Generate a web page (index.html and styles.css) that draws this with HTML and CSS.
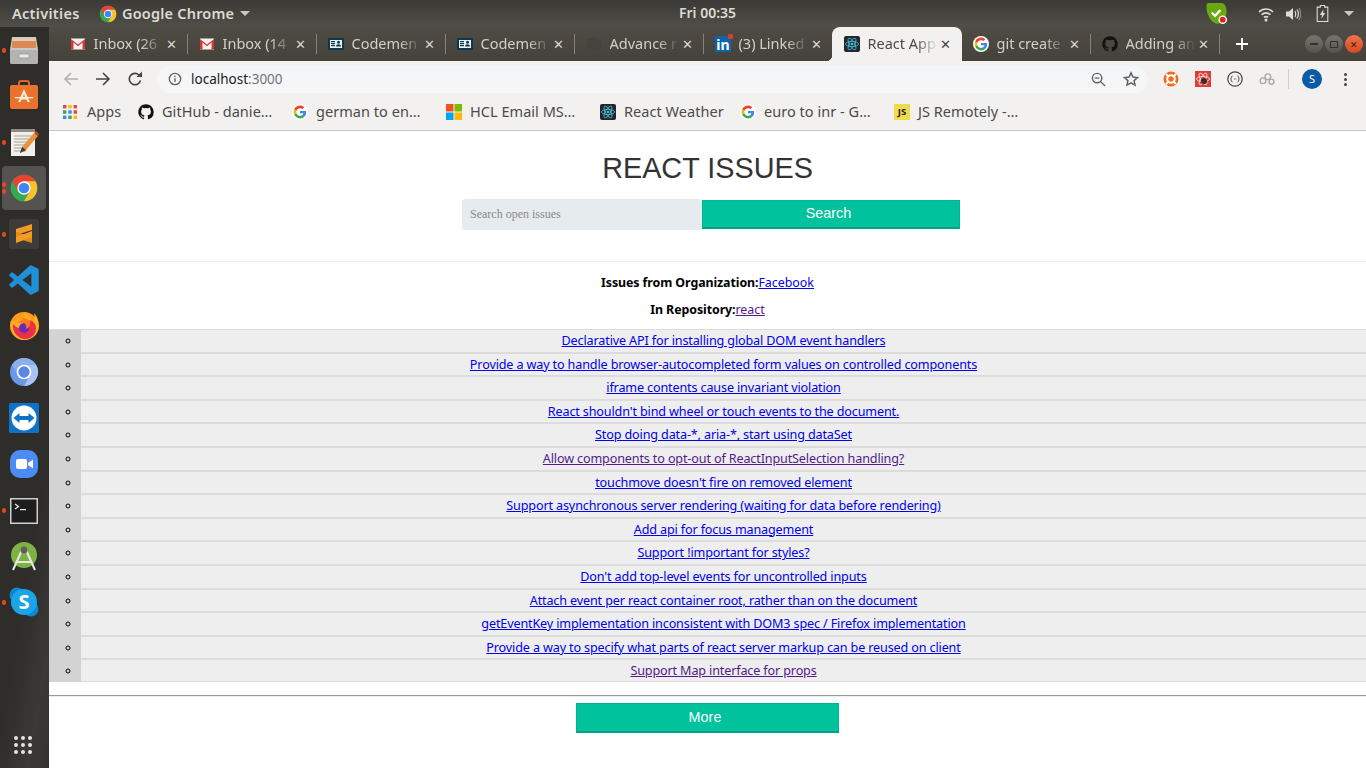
FILE: index.html
```html
<!DOCTYPE html>
<html lang="en">

<head>
  <meta charset="UTF-8" />
  <title>React App</title>
  <link rel="stylesheet" href="styles.css">
</head>

<body>
  <svg class="sprite" xmlns="http://www.w3.org/2000/svg">
    <symbol id="i-gmail" viewBox="0 0 16 16">
      <rect x="1" y="2.5" width="14" height="11" fill="#f4f4f4" />
      <path d="M1 13.5V3l7 5.5L15 3v10.500h-2.500V6.600L8 10.200 3.500 6.600v6.900z" fill="#d93a30" />
    </symbol>
    <symbol id="i-code" viewBox="0 0 16 16">
      <rect x="0" y="2" width="16" height="12" rx="1" fill="#10384a" />
      <rect x="2" y="4" width="12" height="8" fill="#e8f0f2" />
      <rect x="3" y="5" width="4" height="1.200" fill="#10384a" />
      <rect x="3" y="7" width="4" height="1.200" fill="#10384a" />
      <rect x="3" y="9" width="4" height="1.200" fill="#10384a" />
      <circle cx="10.500" cy="6.200" r="1.500" fill="#10384a" />
      <path d="M8 10.500c0-3 5-3 5 0z" fill="#10384a" />
    </symbol>
    <symbol id="i-google" viewBox="-3 -3 30 30">
      <circle cx="12" cy="12" r="15" fill="#fff" />
      <path fill="#4285F4" d="M23.490 12.270c0-.790-.070-1.540-.190-2.270H12v4.510h6.470c-.290 1.480-1.140 2.730-2.400 3.580v3h3.860c2.260-2.090 3.560-5.170 3.560-8.820z" />
      <path fill="#34A853" d="M12 24c3.240 0 5.950-1.080 7.930-2.910l-3.860-3c-1.080.720-2.450 1.160-4.070 1.160-3.130 0-5.780-2.110-6.730-4.960H1.290v3.090C3.260 21.300 7.310 24 12 24z" />
      <path fill="#FBBC05" d="M5.270 14.290c-.250-.720-.380-1.490-.380-2.290s.140-1.570.380-2.290V6.620H1.290C.470 8.240 0 10.060 0 12s.470 3.760 1.290 5.380l3.980-3.090z" />
      <path fill="#EA4335" d="M12 4.750c1.770 0 3.350.610 4.600 1.800l3.420-3.420C17.950 1.190 15.240 0 12 0 7.310 0 3.260 2.700 1.290 6.620l3.980 3.090C6.220 6.860 8.870 4.750 12 4.750z" />
    </symbol>
    <symbol id="i-github" viewBox="0 0 24 25">
      <path fill="#111" d="M12 .5C5.370.5 0 5.870 0 12.500c0 5.300 3.440 9.800 8.200 11.390.6.110.82-.260.82-.580v-2.030c-3.340.730-4.040-1.610-4.040-1.610-.550-1.390-1.330-1.760-1.330-1.760-1.090-.740.080-.730.080-.730 1.200.090 1.840 1.240 1.840 1.240 1.070 1.830 2.810 1.300 3.490 1 .110-.780.420-1.300.760-1.600-2.670-.3-5.470-1.330-5.470-5.930 0-1.310.470-2.380 1.240-3.220-.120-.3-.540-1.520.120-3.180 0 0 1.010-.320 3.300 1.230a11.500 11.500 0 0 1 6 0c2.290-1.550 3.300-1.230 3.300-1.230.660 1.660.240 2.880.120 3.180.770.840 1.240 1.910 1.240 3.220 0 4.610-2.810 5.620-5.480 5.920.430.370.810 1.100.810 2.220v3.290c0 .320.220.690.830.580A12 12 0 0 0 24 12.500C24 5.870 18.630.5 12 .5z" />
    </symbol>
    <symbol id="i-react" viewBox="0 0 16 16">
      <rect width="16" height="16" rx="2" fill="#20262b" />
      <g fill="none" stroke="#4fc3dc" stroke-width=".8">
        <ellipse cx="8" cy="8" rx="6.500" ry="2.600" />
        <ellipse cx="8" cy="8" rx="6.500" ry="2.600" transform="rotate(60 8 8)" />
        <ellipse cx="8" cy="8" rx="6.500" ry="2.600" transform="rotate(120 8 8)" />
      </g>
      <circle cx="8" cy="8" r="1.300" fill="#4fc3dc" />
    </symbol>
    <symbol id="i-chrome" viewBox="0 0 48 48">
      <circle cx="24" cy="24" r="20" fill="#34a853" />
      <path d="M6.700 14A20 20 0 0 1 41.320 14H24L15.340 29z" fill="#ea4335" />
      <path d="M41.320 14A20 20 0 0 1 24 44L32.660 29 24 14z" fill="#fbc02d" />
      <circle cx="24" cy="24" r="10" fill="#fff" />
      <circle cx="24" cy="24" r="8" fill="#4285f4" />
    </symbol>
  </svg>

  <header class="topbar">
    <span class="activities">Activities</span>
    <div class="app-menu">
      <svg class="app-icon"><use href="#i-chrome" /></svg>
      <span>Google Chrome</span>
      <i class="caret"></i>
    </div>
    <span class="clock">Fri 00:35</span>
    <div class="tray">
      <svg class="tray-shield" viewBox="0 0 24 24">
        <path d="M4 1h13c3 0 5 3 5.500 8 .4 6-3 12-10 14C6 21 1.500 14 1.500 4c0-2 1-3 2.500-3z" fill="#6aa80f" />
        <path d="M7 11l3.500 3.500L16 8.500" fill="none" stroke="#fff" stroke-width="2.400" />
        <circle cx="18.500" cy="18.500" r="4.500" fill="#fff" />
        <circle cx="18.500" cy="18.500" r="3" fill="#e3201b" />
      </svg>
      <svg class="tray-wifi" viewBox="0 0 16 16">
        <g fill="none" stroke="#dedcd6" stroke-width="1.700">
          <path d="M1 6c4-4 10-4 14 0" />
          <path d="M3.500 8.700c3-2.500 6-2.500 9 0" />
          <path d="M6 11.300c1.500-1 2.500-1 4 0" />
        </g>
        <circle cx="8" cy="14" r="1.500" fill="#dedcd6" />
      </svg>
      <svg class="tray-sound" viewBox="0 0 16 16">
        <path d="M1 5.500h3L8 2v12l-4-3.500H1z" fill="#dedcd6" />
        <g fill="none" stroke="#dedcd6" stroke-width="1.200">
          <path d="M10 5c1 1.800 1 4.200 0 6" />
          <path d="M12 3.500c1.800 2.800 1.800 6.200 0 9" />
          <path d="M14 2c2.300 3.800 2.300 8.200 0 12" stroke="#8f8d87" />
        </g>
      </svg>
      <svg class="tray-battery" viewBox="0 0 12 16">
        <path d="M4 .5h4v1.500h3v13.500H1V2h3z" fill="none" stroke="#dedcd6" />
        <path d="M7 4L3.500 9.500h2L5 13l3.500-5.500h-2z" fill="#dedcd6" />
      </svg>
      <i class="caret"></i>
    </div>
  </header>

  <div class="desktop">
    <aside class="dock">
      <div class="dock-item">
        <i class="dot"></i>
        <svg viewBox="0 0 32 32">
          <path d="M4 3h24l2 13v12a2 2 0 0 1-2 2H4a2 2 0 0 1-2-2V16z" fill="#c9c9c5" />
          <rect x="4" y="5" width="24" height="9" fill="#d98a55" />
          <rect x="4" y="5" width="24" height="2" fill="#f0c9a0" />
          <rect x="2" y="16" width="28" height="14" rx="2" fill="#b3b3af" />
          <rect x="11" y="20" width="10" height="4" rx="1" fill="#e9e9e6" stroke="#85857f" stroke-width=".6" />
        </svg>
      </div>
      <div class="dock-item">
        <svg viewBox="0 2 32 32">
          <path d="M11 8V5a2 2 0 0 1 2-2h6a2 2 0 0 1 2 2v3" fill="none" stroke="#d9622b" stroke-width="2" />
          <rect x="2" y="7" width="28" height="24" rx="2" fill="#e9722f" />
          <path d="M16 11l-6 13h2.500l1-2.500h5l1 2.500H22zM15 19l1-3 1 3z" fill="#fbe9dc" />
          <rect x="7" y="19" width="18" height="1.300" fill="#fbe9dc" />
        </svg>
      </div>
      <div class="dock-item">
        <i class="dot"></i>
        <svg viewBox="0 0 32 32">
          <rect x="3" y="3" width="24" height="27" fill="#f1efe7" />
          <rect x="3" y="3" width="24" height="3" fill="#8d8b85" />
          <g stroke="#a5a39c" stroke-width="1">
            <path d="M6 10h18M6 13h18M6 16h14M6 19h10M6 22h8M6 25h12" />
          </g>
          <path d="M12 27l2-6L26 7l4 3-12 14z" fill="#e8923a" />
          <path d="M26 7l2-2 3 3-1 2z" fill="#d33a3a" />
          <path d="M12 27l2-6 4 3z" fill="#3a3a3a" />
        </svg>
      </div>
      <div class="dock-item is-active">
        <i class="dot"></i>
        <i class="dot dot-two"></i>
        <svg><use href="#i-chrome" /></svg>
      </div>
      <div class="dock-item">
        <i class="dot"></i>
        <svg viewBox="0 0 32 32">
          <rect x="1" y="1" width="30" height="30" rx="2" fill="#3d3c3a" />
          <path d="M24 6v6L8 17v-6z" fill="#f59a23" />
          <path d="M8 14l16 5v6L8 20z" fill="#e8881a" />
          <path d="M24 13v6L8 25v-6z" fill="#f59a23" />
        </svg>
      </div>
      <div class="dock-item">
        <svg viewBox="-1 -1 26 26">
          <path fill="#1f8fd6" d="M23.150 2.587L18.210.21a1.494 1.494 0 0 0-1.705.29l-9.460 8.630-4.120-3.128a.999.999 0 0 0-1.276.057L.327 7.261A1 1 0 0 0 .326 8.740L3.899 12 .326 15.260a1 1 0 0 0 .001 1.479L1.650 17.940a.999.999 0 0 0 1.276.057l4.120-3.128 9.460 8.630a1.492 1.492 0 0 0 1.704.29l4.942-2.377A1.500 1.500 0 0 0 24 20.060V3.939a1.500 1.500 0 0 0-.85-1.352zm-5.146 14.861L10.826 12l7.178-5.448v10.896z" />
        </svg>
      </div>
      <div class="dock-item">
        <svg viewBox="0 1 32 32">
          <circle cx="16" cy="17" r="14" fill="#ff9a1e" />
          <path d="M3 12c-2 9 4 19 13 19 8 0 15-6 15-14 0-5-2-10-5-13 1 4 0 7-2 8-1-4-4-6-8-9 1 4-1 6-4 8-1-1-2-1-3-1 0 1-1 2-1 3-2-1-4-1-5-1z" fill="#fbb01d" />
          <path d="M5 15c-1 8 5 15 12 15s11-5 11-11c0-4-3-7-6-8 1 3-1 4-3 5l-4-1c-2 1-1 3 1 4-2 1-7 1-11-4z" fill="#ea2f4a" />
          <circle cx="16" cy="19" r="5" fill="#6b2bb5" />
          <path d="M9 13c3 1 5 2 7 1 2 1 3 3 2 6 3-1 5-4 4-8-2-2-5-3-8-3 1 2 0 3-2 3z" fill="#ff7a1e" />
        </svg>
      </div>
      <div class="dock-item">
        <svg viewBox="0 0 48 48">
          <circle cx="24" cy="24" r="21" fill="#6a97e8" />
          <path d="M6 13A21 21 0 0 1 42 13H24L15 29z" fill="#8aaff0" />
          <path d="M42 13A21 21 0 0 1 24 45l9-16-9-16z" fill="#a8c3f3" />
          <circle cx="24" cy="24" r="11" fill="#fff" />
          <circle cx="24" cy="24" r="8.500" fill="#5a88e0" />
        </svg>
      </div>
      <div class="dock-item">
        <svg viewBox="0 0 32 32">
          <rect x="1" y="1" width="30" height="30" rx="1.500" fill="#0e72c8" />
          <circle cx="16" cy="16" r="12.500" fill="#fff" />
          <path d="M5.500 16l6-5v3h9v-3l6 5-6 5v-3h-9v3z" fill="#0e72c8" />
        </svg>
      </div>
      <div class="dock-item">
        <svg viewBox="0 0 32 32">
          <rect x="2" y="2" width="28" height="28" rx="10" fill="#4b8cf5" />
          <rect x="8" y="11" width="11" height="10" rx="2" fill="#fff" />
          <path d="M20 15l5-3.500v9L20 17z" fill="#fff" />
        </svg>
      </div>
      <div class="dock-item">
        <i class="dot"></i>
        <svg viewBox="0 -1 32 32">
          <rect x="2" y="3" width="28" height="26" fill="#d0d0cc" />
          <rect x="3.500" y="4.500" width="25" height="23" fill="#1d1d1d" />
          <path d="M7 9l3.500 2.500L7 14" fill="none" stroke="#eee" stroke-width="1.200" />
          <rect x="12" y="14" width="6" height="1.200" fill="#eee" />
        </svg>
      </div>
      <div class="dock-item">
        <svg viewBox="0 0 32 32">
          <circle cx="16" cy="15" r="13" fill="#7cb342" />
          <path d="M5 30l9-20M27 30l-9-20M9 22h14" stroke="#e8e8e4" stroke-width="2" fill="none" />
          <circle cx="16" cy="10" r="3.500" fill="#5f5f5f" />
        </svg>
      </div>
      <div class="dock-item">
        <i class="dot"></i>
        <svg viewBox="0 0 32 32">
          <circle cx="9" cy="9" r="7.500" fill="#0a87d6" />
          <circle cx="23" cy="23" r="7.500" fill="#0a87d6" />
          <circle cx="16" cy="16" r="13" fill="#1aa5e8" />
          <text x="16" y="23" class="skype-s">S</text>
        </svg>
      </div>
      <div class="dock-grid">
        <i></i><i></i><i></i><i></i><i></i><i></i><i></i><i></i><i></i>
      </div>
    </aside>

    <div class="browser">
      <div class="tabstrip">
        <div class="tab">
          <svg class="tab-icon"><use href="#i-gmail" /></svg>
          <span class="tab-title">Inbox (26</span>
          <span class="tab-close">✕</span>
        </div>
        <div class="tab">
          <svg class="tab-icon"><use href="#i-gmail" /></svg>
          <span class="tab-title">Inbox (14</span>
          <span class="tab-close">✕</span>
        </div>
        <div class="tab">
          <svg class="tab-icon"><use href="#i-code" /></svg>
          <span class="tab-title">Codemen</span>
          <span class="tab-close">✕</span>
        </div>
        <div class="tab">
          <svg class="tab-icon"><use href="#i-code" /></svg>
          <span class="tab-title">Codemen</span>
          <span class="tab-close">✕</span>
        </div>
        <div class="tab">
          <svg class="tab-icon" viewBox="0 0 16 16"><circle cx="8" cy="8" r="7" fill="#45433e" /></svg>
          <span class="tab-title">Advance r</span>
          <span class="tab-close">✕</span>
        </div>
        <div class="tab no-sep">
          <span class="tab-icon linkedin">in<i></i></span>
          <span class="tab-title">(3) Linked</span>
          <span class="tab-close">✕</span>
        </div>
        <div class="tab is-active">
          <svg class="tab-icon"><use href="#i-react" /></svg>
          <span class="tab-title">React App</span>
          <span class="tab-close">✕</span>
        </div>
        <div class="tab">
          <svg class="tab-icon"><use href="#i-google" /></svg>
          <span class="tab-title">git create</span>
          <span class="tab-close">✕</span>
        </div>
        <div class="tab">
          <svg class="tab-icon"><use href="#i-github" /></svg>
          <span class="tab-title">Adding an</span>
          <span class="tab-close">✕</span>
        </div>
        <svg class="new-tab" viewBox="0 0 14 14">
          <path d="M7 1v12M1 7h12" stroke="#fff" stroke-width="1.800" />
        </svg>
        <div class="win-buttons">
          <span class="win-btn"><i class="win-min"></i></span>
          <span class="win-btn"><i class="win-max"></i></span>
          <span class="win-btn win-close">✕</span>
        </div>
      </div>

      <div class="toolbar">
        <svg class="tool tool-off" viewBox="0 0 16 16"><path d="M15 8H2M8 2L2 8l6 6" fill="none" stroke="currentColor" stroke-width="1.600" /></svg>
        <svg class="tool" viewBox="0 0 16 16"><path d="M1 8h13M8 2l6 6-6 6" fill="none" stroke="currentColor" stroke-width="1.600" /></svg>
        <svg class="tool" viewBox="0 0 16 16"><path d="M13.500 9.500A5.700 5.700 0 1 1 12 4" fill="none" stroke="currentColor" stroke-width="1.600" /><path d="M9.500 6H15V.5z" fill="currentColor" /></svg>
        <div class="omnibox">
          <svg class="info" viewBox="0 0 16 16">
            <circle cx="8" cy="8" r="6.500" fill="none" stroke="#5f6368" stroke-width="1.500" />
            <path d="M7.200 7h1.600v4.500H7.200zM7.200 4.200h1.600v1.600H7.200z" fill="#5f6368" />
          </svg>
          <span class="url">localhost<span class="url-port">:3000</span></span>
          <svg class="omni-zoom" viewBox="0 0 16 16">
            <circle cx="6.500" cy="6.500" r="5" fill="none" stroke="#5f6368" stroke-width="1.500" />
            <path d="M10 10l5 5M4 6.500h5" stroke="#5f6368" stroke-width="1.500" />
          </svg>
          <svg class="omni-star" viewBox="0 0 16 16">
            <path d="M8 1.800l1.900 4.200 4.600.5-3.400 3.100.9 4.500-4-2.300-4 2.300.9-4.500L1.500 6.500l4.600-.5z" fill="none" stroke="#5f6368" stroke-width="1.500" />
          </svg>
        </div>
        <div class="extensions">
          <svg viewBox="0 0 16 16">
            <circle cx="8" cy="8" r="7.500" fill="#f26b21" />
            <circle cx="8" cy="8" r="3.800" fill="none" stroke="#fff" stroke-width="2" />
            <path d="M3 3l3 3M13 3l-3 3M3 13l3-3M13 13l-3-3" stroke="#fff" stroke-width="2" />
          </svg>
          <svg viewBox="0 0 16 16">
            <rect width="16" height="16" fill="#d9403a" />
            <g fill="none" stroke="#fbe3e1" stroke-width=".8">
              <ellipse cx="8" cy="8" rx="6.500" ry="2.500" />
              <ellipse cx="8" cy="8" rx="6.500" ry="2.500" transform="rotate(60 8 8)" />
              <ellipse cx="8" cy="8" rx="6.500" ry="2.500" transform="rotate(120 8 8)" />
            </g>
            <circle cx="9" cy="10" r="3" fill="#3a2a2a" />
          </svg>
          <svg viewBox="0 0 16 16">
            <circle cx="8" cy="8" r="7.200" fill="none" stroke="#444" stroke-width="1.200" />
            <path d="M5.500 5C4 5 4.500 7.500 3.800 8c.7.500.2 3 1.700 3M10.500 5c1.500 0 1 2.500 1.700 3-.7.500-.2 3-1.700 3" fill="none" stroke="#444" />
            <path d="M7 8h.8M8.500 8h.8" stroke="#444" />
          </svg>
          <svg viewBox="0 0 18 16">
            <g fill="none" stroke="#a8a8a8" stroke-width="1.500">
              <circle cx="4.500" cy="10" r="3.200" />
              <circle cx="10" cy="5.500" r="3.200" />
              <circle cx="14" cy="11" r="2.800" />
            </g>
          </svg>
        </div>
        <i class="tool-divider"></i>
        <span class="avatar">S</span>
        <div class="kebab"><i></i><i></i><i></i></div>
      </div>

      <div class="bookmarks">
        <div class="bookmark bm-apps">
          <svg viewBox="0 0 14 14">
            <rect x="0" y="0" width="3.400" height="3.400" fill="#ea4335" /><rect x="5.300" y="0" width="3.400" height="3.400" fill="#fbbc05" /><rect x="10.600" y="0" width="3.400" height="3.400" fill="#ea4335" />
            <rect x="0" y="5.300" width="3.400" height="3.400" fill="#34a853" /><rect x="5.300" y="5.300" width="3.400" height="3.400" fill="#4285f4" /><rect x="10.600" y="5.300" width="3.400" height="3.400" fill="#ea4335" />
            <rect x="0" y="10.600" width="3.400" height="3.400" fill="#4285f4" /><rect x="5.300" y="10.600" width="3.400" height="3.400" fill="#34a853" /><rect x="10.600" y="10.600" width="3.400" height="3.400" fill="#fbbc05" />
          </svg>
          <span>Apps</span>
        </div>
        <div class="bookmark bm-github"><svg><use href="#i-github" /></svg><span>GitHub - danie…</span></div>
        <div class="bookmark bm-german"><svg><use href="#i-google" /></svg><span>german to en…</span></div>
        <div class="bookmark bm-hcl">
          <svg viewBox="0 0 16 16">
            <rect width="7.500" height="7.500" fill="#f25022" /><rect x="8.500" width="7.500" height="7.500" fill="#7fba00" />
            <rect y="8.500" width="7.500" height="7.500" fill="#00a4ef" /><rect x="8.500" y="8.500" width="7.500" height="7.500" fill="#ffb900" />
          </svg>
          <span>HCL Email MS…</span>
        </div>
        <div class="bookmark bm-weather"><svg><use href="#i-react" /></svg><span>React Weather</span></div>
        <div class="bookmark bm-euro"><svg><use href="#i-google" /></svg><span>euro to inr - G…</span></div>
        <div class="bookmark bm-js"><b class="js-icon">JS</b><span>JS Remotely -…</span></div>
      </div>

      <main class="page">
        <h1>REACT ISSUES</h1>
        <form class="search-form">
          <input type="text" class="search-input" placeholder="Search open issues" />
          <button type="button" class="green-btn search-btn">Search</button>
        </form>
        <hr class="light-rule" />
        <p class="meta"><b>Issues from Organization:</b><a href="#">Facebook</a></p>
        <p class="meta"><b>In Repository:</b><a href="#" class="seen">react</a></p>
        <ul class="issues">
          <li><a href="#">Declarative API for installing global DOM event handlers</a></li>
          <li><a href="#">Provide a way to handle browser-autocompleted form values on controlled components</a></li>
          <li><a href="#">iframe contents cause invariant violation</a></li>
          <li><a href="#">React shouldn't bind wheel or touch events to the document.</a></li>
          <li><a href="#">Stop doing data-*, aria-*, start using dataSet</a></li>
          <li><a href="#" class="seen">Allow components to opt-out of ReactInputSelection handling?</a></li>
          <li><a href="#">touchmove doesn't fire on removed element</a></li>
          <li><a href="#">Support asynchronous server rendering (waiting for data before rendering)</a></li>
          <li><a href="#">Add api for focus management</a></li>
          <li><a href="#">Support !important for styles?</a></li>
          <li><a href="#">Don't add top-level events for uncontrolled inputs</a></li>
          <li><a href="#">Attach event per react container root, rather than on the document</a></li>
          <li><a href="#">getEventKey implementation inconsistent with DOM3 spec / Firefox implementation</a></li>
          <li><a href="#">Provide a way to specify what parts of react server markup can be reused on client</a></li>
          <li><a href="#" class="seen">Support Map interface for props</a></li>
        </ul>
        <hr class="dark-rule" />
        <button type="button" class="green-btn more-btn">More</button>
      </main>
    </div>
  </div>
</body>

</html>
```

FILE: styles.css
```css
* {
  box-sizing: border-box;
  margin: 0;
  padding: 0;
}

html,
body {
  height: 768px;
  overflow: hidden;
}

body {
  display: flex;
  flex-direction: column;
  font-family: "Noto Sans", sans-serif;
  background: #fff;
}

i {
  display: block;
}

.sprite {
  display: none;
}

/* ubuntu top bar */
.topbar {
  height: 27px;
  display: flex;
  align-items: center;
  position: relative;
  padding-left: 12px;
  background: linear-gradient(#3b3a36, #504e48);
  color: #dcdad4;
  font-size: 14.5px;
  font-weight: 600;
}

.activities {
  width: 86px;
  margin-top: -2px;
  letter-spacing: 0.3px;
}

.app-menu {
  display: flex;
  align-items: center;
  gap: 4px;
  letter-spacing: 0.2px;
}

.app-menu span {
  margin-top: -2px;
}

.app-icon {
  width: 20px;
  height: 20px;
}

.caret {
  width: 0;
  height: 0;
  border-left: 5px solid transparent;
  border-right: 5px solid transparent;
  border-top: 5px solid #c9c7c1;
  margin-left: 2px;
}

.clock {
  position: absolute;
  left: 679px;
  top: 3px;
  font-size: 14px;
}

.tray {
  margin-left: auto;
  display: flex;
  align-items: center;
  padding-right: 12px;
}

.tray-shield {
  width: 23px;
  height: 23px;
  margin-right: 30px;
}

.tray-wifi {
  width: 16px;
  height: 16px;
  margin-right: 11px;
}

.tray-sound {
  width: 16px;
  height: 16px;
  margin-right: 15px;
}

.tray-battery {
  width: 13px;
  height: 17px;
  margin-right: 13px;
}

.desktop {
  flex: 1;
  display: flex;
  min-height: 0;
}

/* launcher */
.dock {
  width: 49px;
  flex-shrink: 0;
  display: flex;
  flex-direction: column;
  align-items: flex-start;
  padding-left: 2px;
  background: linear-gradient(100deg, #2f2d2a 70%, #3b3936 88%, #34322f 100%);
}

.dock-item {
  width: 44px;
  height: 46px;
  flex-shrink: 0;
  display: flex;
  justify-content: center;
  align-items: center;
  position: relative;
  border-radius: 4px;
}

.dock-item svg {
  width: 32px;
  height: 32px;
}

.dock-item.is-active {
  height: 44px;
  margin: 1px 0;
  background: #55534f;
}

.dot {
  position: absolute;
  left: -0.5px;
  top: 21px;
  width: 4.5px;
  height: 4.5px;
  border-radius: 50%;
  background: #e2491c;
}

.is-active .dot {
  top: 16px;
}

.is-active .dot-two {
  top: 23px;
}

.skype-s {
  font-family: "Noto Sans", sans-serif;
  font-size: 20px;
  font-weight: 700;
  fill: #fff;
  text-anchor: middle;
}

.dock-grid {
  margin-top: auto;
  margin-bottom: 14px;
  margin-left: 12px;
  display: grid;
  grid-template-columns: repeat(3, 4px);
  gap: 3px;
}

.dock-grid i {
  width: 4px;
  height: 4px;
  border-radius: 50%;
  background: #e4e4e0;
}

/* chrome */
.browser {
  flex: 1;
  min-width: 0;
  display: flex;
  flex-direction: column;
}

.tabstrip {
  height: 34px;
  display: flex;
  padding-left: 9px;
  background: linear-gradient(#4f4c45, #45423c);
  color: #d2d0ca;
  font-size: 14.5px;
}

.tab {
  width: 129px;
  height: 34px;
  flex-shrink: 0;
  display: flex;
  align-items: center;
  padding-left: 12px;
  position: relative;
}

.tab::after {
  content: "";
  position: absolute;
  right: -1px;
  top: 7px;
  width: 1px;
  height: 20px;
  background: #85837c;
}

.tab.no-sep::after,
.tab.is-active::after {
  display: none;
}

.tab-icon {
  width: 16px;
  height: 16px;
  flex-shrink: 0;
}

.tab-title {
  width: 70px;
  margin-left: 7.5px;
  margin-top: -2px;
  white-space: nowrap;
  overflow: hidden;
  -webkit-mask-image: linear-gradient(to right, #000 68%, transparent 100%);
  mask-image: linear-gradient(to right, #000 68%, transparent 100%);
}

.tab-close {
  width: 14px;
  margin-left: 1px;
  font-size: 13px;
  line-height: 14px;
  text-align: center;
  color: #d8d6d0;
}

.tab.is-active {
  width: 130px;
  margin-right: -1px;
  border-radius: 8px 8px 0 0;
  background: #f2f1f0;
  color: #4a4a4a;
  z-index: 1;
}

.tab.is-active::before {
  content: "";
  position: absolute;
  left: -6px;
  bottom: 0;
  width: 6px;
  height: 6px;
  background: radial-gradient(circle at 0 0, transparent 6px, #f2f1f0 6.5px);
}

.tab.is-active .tab-close {
  color: #444;
}

.linkedin {
  display: block;
  position: relative;
  background: #0a66a8;
  color: #fff;
  font-size: 14px;
  line-height: 17px;
  font-weight: 700;
  text-align: center;
}

.linkedin i {
  position: absolute;
  right: -2px;
  top: -2px;
  width: 5px;
  height: 5px;
  background: #e3362c;
  border-radius: 1px;
}

.new-tab {
  width: 14px;
  height: 14px;
  margin: 10px 0 0 16px;
}

.win-buttons {
  margin-left: auto;
  margin-right: 3px;
  display: flex;
  gap: 2px;
  align-items: center;
}

.win-btn {
  width: 18px;
  height: 18px;
  border-radius: 50%;
  display: flex;
  justify-content: center;
  align-items: center;
  background: linear-gradient(#777570, #55534d);
}

.win-min {
  width: 8px;
  height: 1.5px;
  background: #33322e;
}

.win-max {
  width: 8px;
  height: 7px;
  border: 1px solid #33322e;
}

.win-close {
  background: linear-gradient(#f0724a, #d84a20);
  color: #4a1a0a;
  font-size: 9px;
}

.toolbar {
  height: 34px;
  display: flex;
  align-items: center;
  padding: 2px 0 0 14px;
  background: #f2f1f0;
}

.tool {
  width: 16px;
  height: 16px;
  margin-right: 16px;
  color: #444;
  flex-shrink: 0;
}

.tool-off {
  color: #b0b0ae;
}

.omnibox {
  width: 991px;
  height: 27px;
  margin-left: -2px;
  display: flex;
  align-items: center;
  padding-left: 11px;
  border-radius: 14px;
  background: #f5f6f7;
  font-size: 13.5px;
  flex-shrink: 0;
}

.info {
  width: 14px;
  height: 14px;
}

.url {
  margin-left: 9px;
  color: #222;
}

.url-port {
  color: #70757a;
}

.omni-zoom {
  width: 15px;
  height: 15px;
  margin-left: auto;
  margin-right: 17px;
}

.omni-star {
  width: 16px;
  height: 16px;
  margin-right: 9px;
}

.extensions {
  display: flex;
  align-items: center;
  gap: 16px;
  margin-left: 15px;
}

.extensions svg {
  width: 16px;
  height: 16px;
}

.tool-divider {
  width: 1px;
  height: 20px;
  margin-left: 13px;
  background: #d0cfcd;
}

.avatar {
  width: 20px;
  height: 20px;
  margin-left: 13px;
  border-radius: 50%;
  background: #0b5aa5;
  color: #fff;
  font-size: 11px;
  line-height: 20px;
  text-align: center;
}

.kebab {
  margin-left: 22px;
  display: flex;
  flex-direction: column;
  gap: 2px;
}

.kebab i {
  width: 3px;
  height: 3px;
  border-radius: 50%;
  background: #444;
}

.bookmarks {
  height: 36px;
  display: flex;
  align-items: center;
  padding: 0 0 2px 14px;
  background: #f2f1f0;
  border-bottom: 1px solid #c9c8c6;
  color: #4b4b4b;
  font-size: 14.5px;
}

.bookmark {
  display: flex;
  align-items: center;
  gap: 8px;
  white-space: nowrap;
  flex-shrink: 0;
}

.bookmark span {
  margin-top: -2px;
  letter-spacing: 0.04px;
}

.bookmark svg {
  width: 16px;
  height: 16px;
  flex-shrink: 0;
}

.bm-apps {
  width: 75px;
  gap: 10px;
}

.bm-apps svg {
  width: 14px;
  height: 14px;
}

.bm-github {
  width: 154px;
}

.bm-german {
  width: 154px;
}

.bm-hcl {
  width: 154px;
}

.bm-weather {
  width: 140px;
}

.bm-euro {
  width: 154px;
}

.bm-js {
  width: 150px;
}

.js-icon {
  width: 16px;
  height: 16px;
  background: #f0db4f;
  color: #222;
  font-size: 9.5px;
  line-height: 16px;
  text-align: center;
}

/* the page itself */
.page {
  flex: 1;
  min-height: 0;
  background: #fff;
  text-align: center;
}

h1 {
  padding-top: 21px;
  font-family: "Liberation Sans", sans-serif;
  font-size: 28.8px;
  font-weight: 400;
  line-height: 33px;
  color: #333;
}

.search-form {
  display: flex;
  justify-content: center;
  align-items: center;
  margin-top: 14px;
  padding-left: 7px;
}

.search-input {
  width: 240px;
  height: 31px;
  padding: 0 8px;
  border: none;
  border-radius: 3px;
  background: #e6ecee;
  font-family: "Liberation Serif", serif;
  font-size: 12px;
}

.search-input::placeholder {
  color: #8a8a8a;
}

.green-btn {
  height: 29px;
  padding: 0 5px 2px 0;
  border: 1px solid #00b392;
  border-bottom: 2px solid #00a589;
  background: #00c29c;
  color: #fff;
  font-family: "Liberation Sans", sans-serif;
  font-size: 14.4px;
}

.search-btn {
  width: 258px;
}

.light-rule {
  margin-top: 31px;
  border: none;
  border-top: 1px solid #eee;
}

.meta {
  margin-top: 10px;
  font-size: 12.4px;
  line-height: 17px;
  color: #000;
}

.meta b {
  letter-spacing: -0.08px;
}

.light-rule + .meta {
  margin-top: 12px;
}

a {
  color: #0000ee;
}

a.seen {
  color: #551a8b;
}

.issues {
  margin-top: 11px;
  padding-left: 32px;
  border-top: 1px solid #dcdcdc;
  background: #d3d3d3;
  list-style: circle;
  font-size: 12.6px;
  letter-spacing: -0.14px;
}

.issues li {
  height: 23.6px;
  line-height: 21.6px;
  background: #eee;
  border-bottom: 2px solid #dcdcdc;
}

.issues li:last-child {
  height: 22px;
  border-bottom-width: 1px;
}

.dark-rule {
  margin-top: 13px;
  border: none;
  border-top: 1px solid #999;
  border-bottom: 1px solid #eee;
}

.more-btn {
  display: block;
  width: 263px;
  height: 30px;
  margin: 6px auto 0;
}
```
